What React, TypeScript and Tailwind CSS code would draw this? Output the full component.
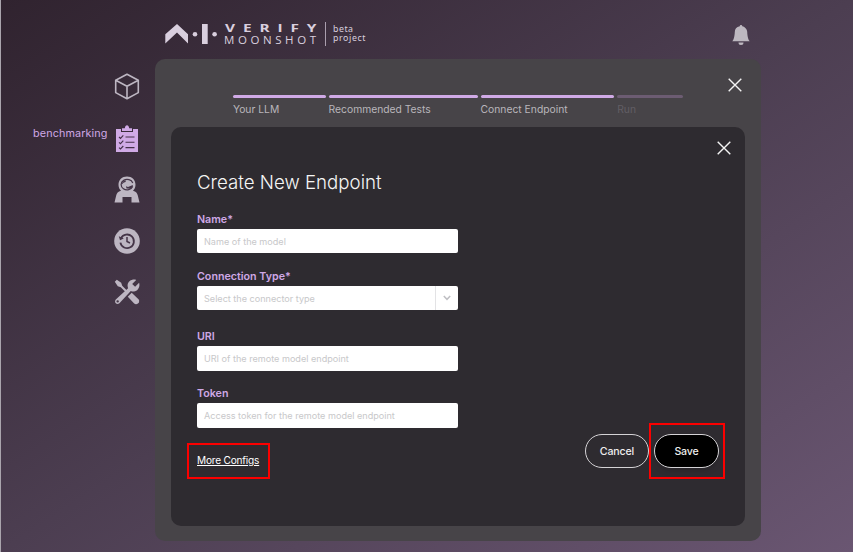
import type { ReactNode } from "react";
import { BsBellFill } from "react-icons/bs";

const steps = [
  { label: "Your LLM", width: "w-[92.6px]", active: true },
  { label: "Recommended Tests", width: "w-[149px]", active: true },
  { label: "Connect Endpoint", width: "w-[133.6px]", active: true },
  { label: "Run", width: "w-[66px]", active: false },
];

function Logo() {
  return (
    <svg width="204" height="28" viewBox="0 0 204 28" fill="#d9cfde" className="block overflow-visible">
      <path d="M.3 21.6V12.3L12 2L23 12.3V21.6L12 10.6Z" />
      <circle cx="30" cy="12.3" r="2.3" />
      <rect x="37" y="2" width="5.7" height="20" />
      <circle cx="49.6" cy="12.3" r="2.3" />
      <text transform="translate(60 9.6) scale(1.5 1)" fontFamily="'Open Sans'" fontWeight="700" fontSize="10.3" textLength="61" lengthAdjust="spacing">VERIFY</text>
      <text x="59" y="22" fontFamily="'Open Sans'" fontWeight="400" fontSize="11.5" textLength="92" lengthAdjust="spacing">MOONSHOT</text>
      <rect x="160" y="0" width="1" height="24" opacity="0.7" />
      <text x="168" y="10" fontFamily="'Noto Sans'" fontSize="8.8" textLength="20">beta</text>
      <text x="168" y="19.3" fontFamily="'Noto Sans'" fontSize="8.8" textLength="32.5">project</text>
    </svg>
  );
}

function CubeIcon() {
  return (
    <svg width="26" height="27" viewBox="0 0 26 27" fill="none" stroke="#bdb6c2" strokeWidth="1.6" strokeLinejoin="round">
      <path d="M13 1.2L24.3 7.2V19.6L13 25.8L1.7 19.6V7.2ZM1.7 7.2L13 13.2L24.3 7.2M13 13.2V25.8" />
    </svg>
  );
}

function ClipboardIcon() {
  return (
    <svg width="22" height="27" viewBox="0 0 22 27">
      <path fill="#d0aae6" d="M0 4H5V7H17V4H22V27H0ZM6 6V3.3H8.8C9 1.3 10 .3 11 .3S13 1.3 13.2 3.3H16V6Z" />
      <path stroke="#443149" strokeWidth="1.1" fill="none" d="M9.5 12H18.5M9.5 17.3H18.5M9.5 22.6H18.5M3 12L4.5 13.4L7.3 10.4M3 17.3L4.5 18.7L7.3 15.7M3 22.6L4.5 24L7.3 21" />
    </svg>
  );
}

function AstronautIcon() {
  return (
    <svg width="26" height="27" viewBox="0 0 26 27">
      <path fill="#bdb6c2" d="M13 .5C18 .5 21.5 4 21.5 8.7C21.5 11.3 20.5 13.3 19 14.7C22 15.5 23.3 17.3 23.8 19.5L25.5 26.5H17.5V21H8.5V26.5H.5L2.2 19.5C2.7 17.3 4 15.5 7 14.7C5.5 13.3 4.5 11.3 4.5 8.7C4.5 4 8 .5 13 .5Z" />
      <path d="M18.7 10.5A6 5.2 0 1 1 18.8 7" fill="none" stroke="#453548" strokeWidth="1.2" />
      <path d="M7.8 8.5C8 5.8 9.7 4.5 12 4.5L11.5 6L9.5 6.8ZM12 10.2L14 11L18.8 9V10.5L16.5 12.8L12.5 12.4Z" fill="#453548" />
    </svg>
  );
}

function HistoryIcon() {
  return (
    <svg width="26" height="26" viewBox="0 0 26 26">
      <circle cx="13" cy="13" r="12.8" fill="#bdb6c2" />
      <path d="M7 10.3A6.8 6.8 0 1 1 6.4 14.6" fill="none" stroke="#453548" strokeWidth="1.8" />
      <path d="M4.8 8.2L6 12.3L9.8 10.4Z" fill="#453548" />
      <path d="M13 9V13.5L16 15" fill="none" stroke="#453548" strokeWidth="1.5" />
    </svg>
  );
}

function ToolsIcon() {
  return (
    <svg width="26" height="26" viewBox="0 0 26 26" fill="#bdb6c2">
      <path d="M.8 2.8L2.8 .8L7.2 3.8L8.2 6.8L13.4 12L12 13.4L6.8 8.2L3.8 7.2Z" />
      <path d="M22.2 .9L18.2 4.9L21.1 7.8L25.1 3.8C26.3 7.6 24 12 20 12.4C18.8 12.5 17.8 12.3 16.8 11.9L5.4 24.2C2.8 26.4 -.4 23.2 1.8 20.6L14.1 9.2C13.7 8.2 13.5 7.2 13.6 6C14 2 18.4 -.3 22.2 .9ZM3.6 21.2A1.2 1.2 0 1 0 3.7 23.6A1.2 1.2 0 0 0 3.6 21.2Z" fillRule="evenodd" />
      <path d="M17.7 13.8L24.5 20.2C26.8 22.8 22.8 26.8 20.2 24.5L13.8 17.7Z" />
    </svg>
  );
}

function CloseButton() {
  return (
    <button aria-label="Close" className="block">
      <svg width="14" height="14" viewBox="0 0 14 14" stroke="#f4f4f4" strokeWidth="1.4">
        <path d="M.7 .7L13.3 13.3M13.3 .7L.7 13.3" />
      </svg>
    </button>
  );
}

function Field({ label, placeholder, className = "", children }: { label: string; placeholder: string; className?: string; children?: ReactNode }) {
  return (
    <div className={className}>
      <div className="h-4 text-[10.7px] leading-[18px] font-semibold text-[#cfa8e6]">{label}</div>
      <div className="mt-[2px] flex h-[24.4px] w-[261px] items-center justify-between rounded-[2px] bg-white pl-[7px] text-[9.1px] text-[#c8c8ca]">
        <span className="pt-px">{placeholder}</span>
        {children}
      </div>
    </div>
  );
}

export default function App() {
  return (
    <div className="flex h-[552px] w-[853px] flex-col overflow-hidden border-l border-[#aaa5ad] bg-linear-to-br from-[#30232f] via-[#4c3e51] to-[#6a5672] font-['Inter',sans-serif]">
      <header className="flex h-[59px] shrink-0 items-start justify-between pt-[22px] pr-[102px] pl-[164px]">
        <Logo />
        <BsBellFill className="mt-[3px] h-5 w-5 text-[#bdb8c0]" />
      </header>
      <div className="flex">
        <nav className="flex w-[154px] flex-col pt-[14px] pl-[32px]">
          <div className="flex h-[51.5px] w-[107px] justify-end"><CubeIcon /></div>
          <div className="flex h-[51.5px] w-[105px] justify-between">
            <span className="text-[10.8px] leading-[18px] tracking-[0.12px] whitespace-nowrap text-[#cfa8e6]">benchmarking</span>
            <ClipboardIcon />
          </div>
          <div className="flex h-[51.5px] w-[107px] justify-end"><AstronautIcon /></div>
          <div className="flex h-[51.5px] w-[107px] justify-end"><HistoryIcon /></div>
          <div className="flex w-[107px] justify-end"><ToolsIcon /></div>
        </nav>
        <main className="h-[482px] w-[606px] rounded-[10px] bg-[#474448] px-4">
          <div className="flex h-[68px] justify-between pr-[3px] pl-[62px]">
            <div className="flex gap-[3px] pt-9">
              {steps.map((s) => (
                <div key={s.label} className={s.width}>
                  <div className={s.active ? "h-[3px] rounded-sm bg-[#d0aae6]" : "h-[3px] rounded-sm bg-[#6c5c72]"} />
                  <div className={s.active ? "mt-[3px] text-[10.3px] leading-4 whitespace-nowrap text-[#b9b6bb]" : "mt-[3px] text-[10.3px] leading-4 text-[#625e65]"}>{s.label}</div>
                </div>
              ))}
            </div>
            <div className="pt-[19px]"><CloseButton /></div>
          </div>
          <section className="h-[399px] w-[574px] rounded-[10px] bg-[#2e2b30] pr-[14px] pl-[26px]">
            <div className="flex h-[42px] items-start justify-end pt-[14px]"><CloseButton /></div>
            <h1 className="h-[42px] text-[18.7px] leading-[27px] font-light text-[#f5f5f5]">Create New Endpoint</h1>
            <Field label="Name*" placeholder="Name of the model" />
            <Field label="Connection Type*" placeholder="Select the connector type" className="mt-[14.6px]">
              <span className="flex h-6 w-[23px] items-center justify-center border-l border-[#e3e3e5]">
                <svg width="8" height="6" viewBox="0 0 8 6" fill="none" stroke="#bfbfc3" strokeWidth="1.5"><path d="M.8 1L4 4.3L7.2 1" /></svg>
              </span>
            </Field>
            <Field label="URI" placeholder="URI of the remote model endpoint" className="mt-[18px]" />
            <Field label="Token" placeholder="Access token for the remote model endpoint" className="mt-[14.6px]" />
            <div className="-mt-[4.6px] -ml-[10px] flex w-[538px] items-end justify-between">
              <div className="flex h-9 w-[83px] items-center border-2 border-[#fb0000] pb-[2px] pl-2">
                <a className="text-[10.1px] leading-4 tracking-[-0.2px] whitespace-nowrap text-white underline underline-offset-1">More Configs</a>
              </div>
              <div className="flex items-center">
                <button className="h-[34px] w-16 rounded-full border border-[#d5d3d6] pt-px text-[10.6px] font-medium tracking-[-0.15px] text-[#eeeeee]">Cancel</button>
                <div className="flex h-14 w-[76px] items-center border-2 border-[#fb0000] pl-[3px]">
                  <button className="h-[34px] w-[65px] rounded-full border border-[#d5d3d6] bg-black pt-px text-[10.6px] font-medium tracking-[-0.15px] text-[#eeeeee] shadow-md">Save</button>
                </div>
              </div>
            </div>
          </section>
        </main>
      </div>
    </div>
  );
}
